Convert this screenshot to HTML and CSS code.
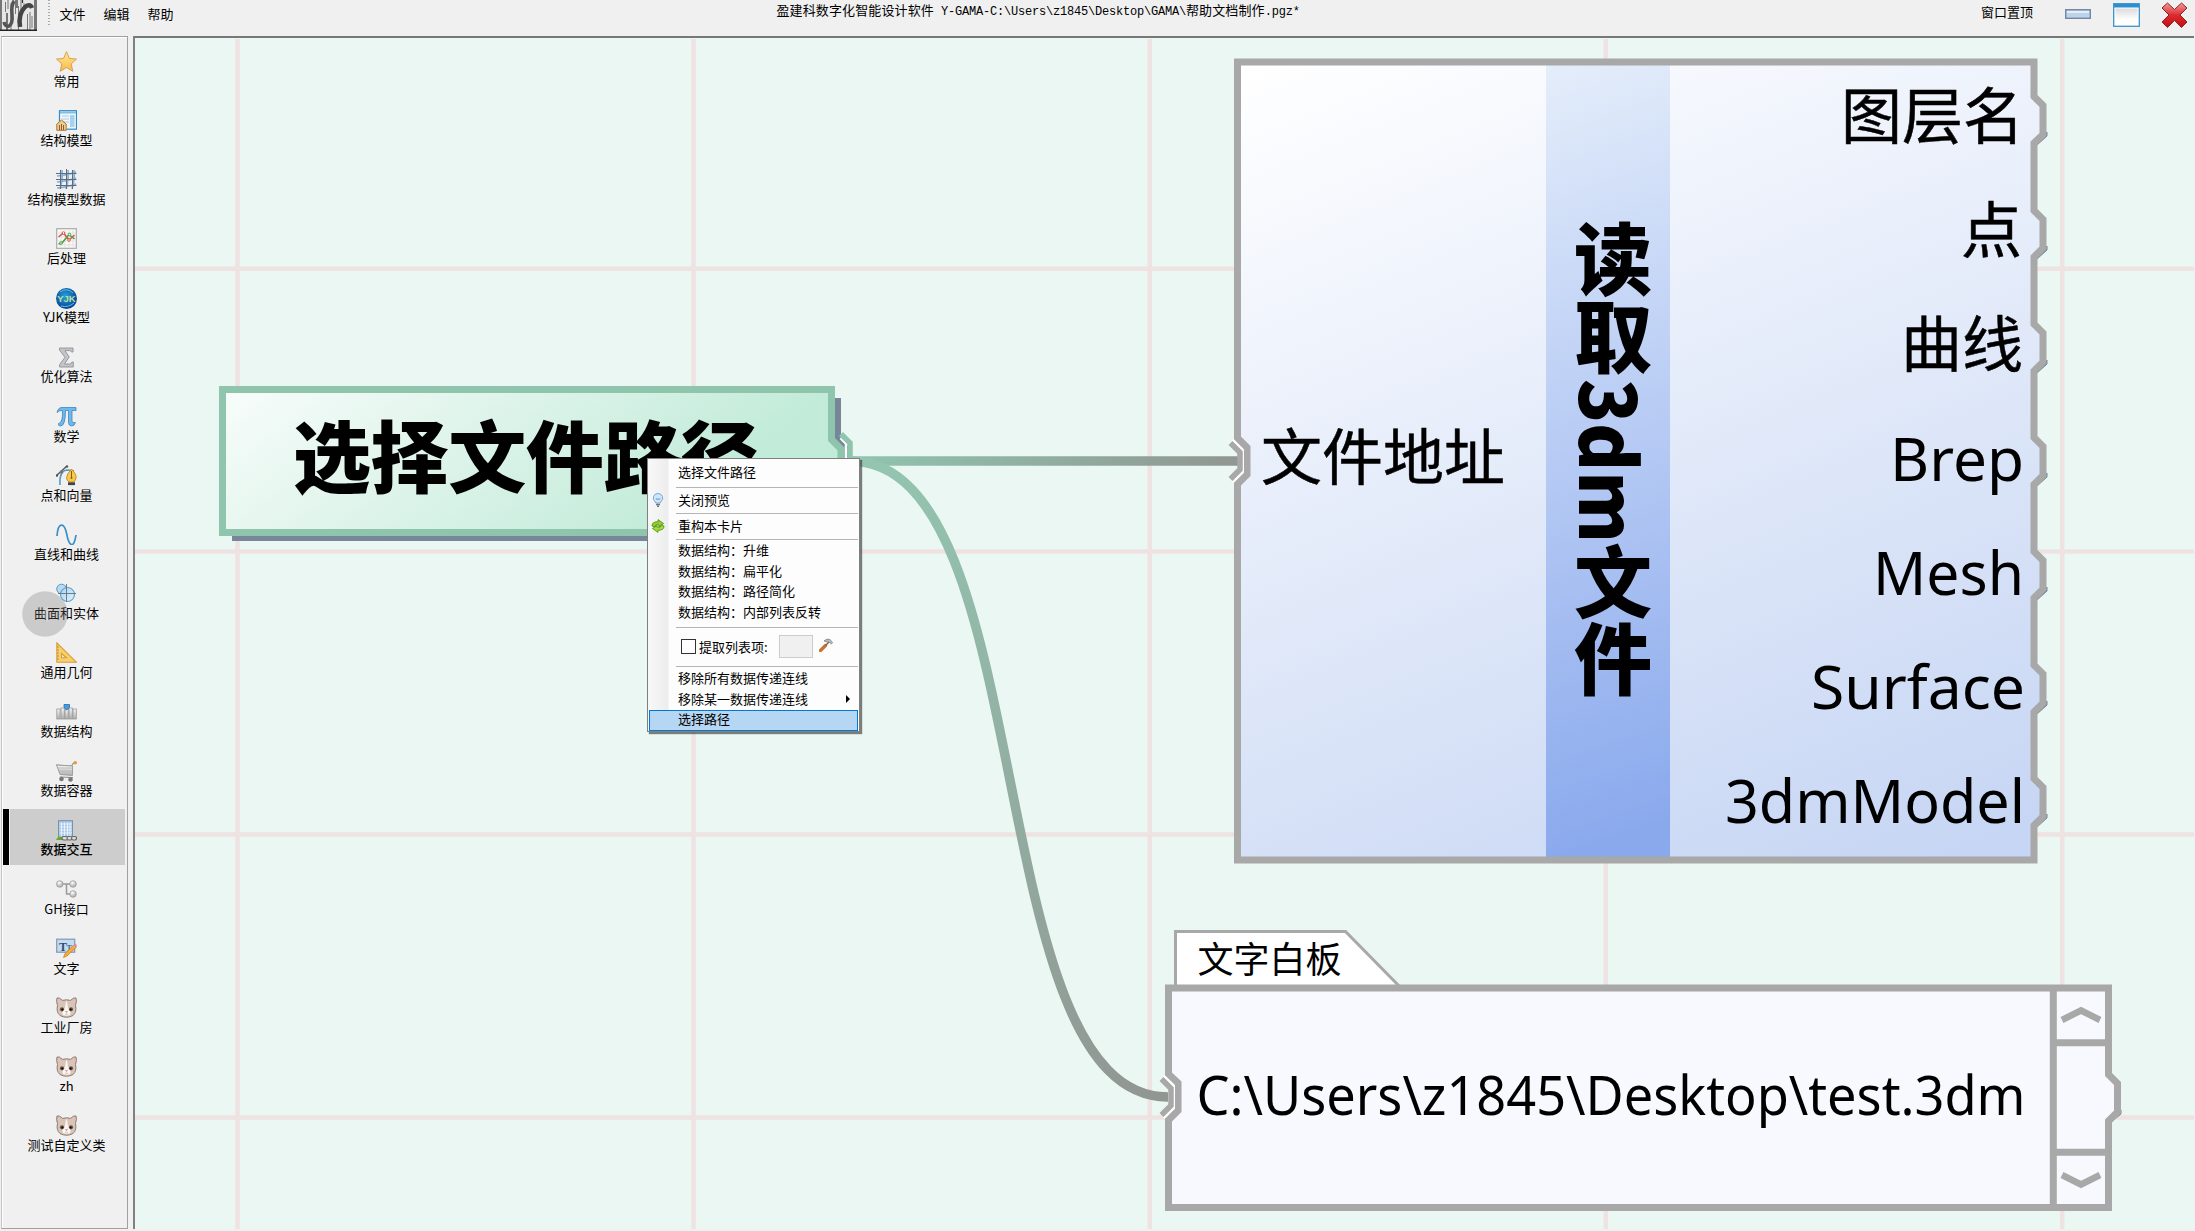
FILE: index.html
```html
<!DOCTYPE html>
<html lang="zh-CN">
<head>
<meta charset="utf-8">
<title>Y-GAMA</title>
<link rel="stylesheet" href="styles.css">
</head>
<body>
<svg class="defs" width="0" height="0">
  <defs>
    <linearGradient id="gold" x1="0" y1="0" x2="0" y2="1"><stop offset="0" stop-color="#ffeb9a"/><stop offset="1" stop-color="#f5bb45"/></linearGradient>
    <linearGradient id="ice" x1="0" y1="0" x2="1" y2="1"><stop offset="0" stop-color="#a9d4f2"/><stop offset="1" stop-color="#e2f1fb"/></linearGradient>
    <radialGradient id="globe" cx=".45" cy=".4" r=".6"><stop offset="0" stop-color="#2ba3df"/><stop offset="1" stop-color="#07408f"/></radialGradient>
    <radialGradient id="ball" cx=".4" cy=".3" r=".7"><stop offset="0" stop-color="#fff"/><stop offset="1" stop-color="#a5a5a5"/></radialGradient>
    <linearGradient id="steel" x1="0" y1="0" x2="0" y2="1"><stop offset="0" stop-color="#f6f6f6"/><stop offset="1" stop-color="#adadad"/></linearGradient>
    <linearGradient id="red" x1="0" y1="0" x2="0" y2="1"><stop offset="0" stop-color="#f49a9a"/><stop offset=".5" stop-color="#dd2a2e"/><stop offset="1" stop-color="#c40d12"/></linearGradient>
    <linearGradient id="pane" x1="0" y1="0" x2="0" y2="1"><stop offset="0" stop-color="#dcdcdc"/><stop offset=".7" stop-color="#fff"/></linearGradient>
    <symbol id="cat" viewBox="0 0 21 21">
      <path d="M1 1 Q3 0 6.5 3.4 Q10.500 2.200 14.500 3.400 Q18 0 20 1 Q21 4 19.500 8.500 Q21 15 17 18.500 Q10.500 22 4 18.500 Q0 15 1.500 8.500 Q0 4 1 1Z" fill="#d8c5b8" stroke="#8c7a72" stroke-width="1"/>
      <path d="M2.500 2.800 L5.200 4.700 3 7Z M18.500 2.800 L15.800 4.700 18 7Z" fill="#f2b9b5"/>
      <path d="M10 4.500 L9 11 Q5 14 7 18 Q10.500 19.500 14 18 Q16 14 12 11 L11 4.500Z" fill="#fbf6f2"/>
      <circle cx="6" cy="12.300" r="2.100" fill="#6b5546"/><circle cx="15" cy="12.300" r="2.100" fill="#6b5546"/>
      <circle cx="6.300" cy="12.500" r="1" fill="#120d0a"/><circle cx="14.700" cy="12.500" r="1" fill="#120d0a"/>
      <path d="M9.500 14.500h2l-1 1.200Z M9.200 17.200h2.600" fill="#d88" stroke="#c99" stroke-width=".7"/>
    </symbol>
  </defs>
</svg>

<header class="titlebar">
  <svg class="logo" viewBox="0 0 37 31">
    <rect width="37" height="31" fill="#e6e6e6"/>
    <path d="M1.500 0V31M5.500 2V12M8 0V9M11 3V30M15.500 0V14M18.500 6V31M21 0V12M24 3V9M27.500 14V31M30 12V30M34.500 0V31M13.500 0V5M32 16V28" stroke="#777" stroke-width="1"/>
    <path d="M0 0V31M7 13V30M17 0V8M22.500 0V3M36 0V31" stroke="#2c2c2c" stroke-width="1.200"/>
    <path d="M0 30.300H37" stroke="#222" stroke-width="1.500"/>
    <path d="M14 1 Q11 6 12 14 Q13 24 9 26 Q5 27 4 22" fill="none" stroke="#555" stroke-width="3.500"/>
    <path d="M20 27 Q18 14 25 7 Q30 3 32 8" fill="none" stroke="#444" stroke-width="4.500"/>
  </svg>
  <span class="grip"></span>
  <nav class="menubar"><span>文件</span><span>编辑</span><span>帮助</span></nav>
  <div class="doc-title">盈建科数字化智能设计软件<i> Y-GAMA-C:\Users\z1845\Desktop\GAMA\</i>帮助文档制作<i>.pgz*</i></div>
  <div class="window-tools">
    <span class="pin">窗口置顶</span>
    <svg class="win-min" viewBox="0 0 26 10"><rect x=".7" y=".7" width="24.600" height="8.600" fill="#bdd3ea" stroke="#7388a5" stroke-width="1.400"/><path d="M2 3H24" stroke="#e3eef8" stroke-width="2"/></svg>
    <svg class="win-max" viewBox="0 0 27 24"><rect x=".7" y=".7" width="25.600" height="22.600" fill="#fff" stroke="#3a93c9" stroke-width="1.300"/><rect x="1" y="1" width="25" height="3.500" fill="#2c8fd2"/><rect x="2.500" y="5.500" width="22" height="16" fill="url(#pane)"/></svg>
    <svg class="win-close" viewBox="0 0 27 26"><path d="M1 6 L6.500 1 13.500 7.500 20.500 1 26 6 19 13 26 20 20.500 25.500 13.500 18.500 6.500 25.500 1 20 8 13Z" fill="url(#red)" stroke="#8a2327" stroke-width="1"/></svg>
  </div>
</header>

<main class="workspace">
  <aside class="sidebar">
    <div class="cat"><svg viewBox="0 0 21 21"><path d="M10.500 .6 L13.400 7.500 20.500 8 15.200 12.900 16.800 20.300 10.500 16.500 4.200 20.300 5.800 12.900 .5 8 7.600 7.500Z" fill="url(#gold)" stroke="#dc9d52" stroke-width="1"/></svg><span>常用</span></div>
    <div class="cat"><svg viewBox="0 0 21 21"><rect x="3.500" y=".7" width="17" height="18.500" fill="#eef6fc" stroke="#2f8dc6" stroke-width="1.200"/><path d="M4 2.500H20" stroke="#7cbfe8" stroke-width="2"/><path d="M6 6h7M6 9h7M6 12h7" stroke="#b9cbdc"/><rect x="14" y="5" width="4.500" height="12" fill="#a6d1ef"/><path d="M.8 20.300V14L5.500 10 10.200 14V20.300Z" fill="#f1cb8c" stroke="#a8763c"/><path d="M3.500 20V15M5.500 20V14M7.500 20V15" stroke="#8f5f31" stroke-width="1"/></svg><span>结构模型</span></div>
    <div class="cat"><svg viewBox="0 0 21 21"><path d="M1 7 Q12 6 20 3M1 13 Q12 12 20 9M1 19 Q12 18 20 15M4 20Q7 10 6 1M10 20Q13 10 12 1M16 20Q19 10 18 1" fill="none" stroke="#82b1de" stroke-width="1.700"/><path d="M0 4.500H20.500M0 10.500H20.500M0 16.500H20.500M4.500 1V20M10.500 0V20M16.500 1V20" stroke="#646b75" stroke-width="1"/></svg><span>结构模型数据</span></div>
    <div class="cat"><svg viewBox="0 0 21 21"><rect x=".7" y=".7" width="19.600" height="19.600" fill="#f9f9f9" stroke="#aaa" stroke-width="1.200"/><path d="M5 2V19M9 2V19M13 2V19M17 2V19M2 5H19M2 9H19M2 13H19M2 17H19" stroke="#dedede" stroke-width=".8"/><path d="M2.500 9 L7.500 5 13 12 18.500 7" fill="none" stroke="#df5450" stroke-width="1.600"/><path d="M2.500 16 L6 15 13 6.500 18.500 11" fill="none" stroke="#4d9f3b" stroke-width="1.600"/><g fill="#fff"><circle cx="7.500" cy="5" r="1.300" stroke="#df5450"/><circle cx="13" cy="12" r="1.300" stroke="#df5450"/><circle cx="5" cy="15" r="1.300" stroke="#4d9f3b"/><circle cx="13.500" cy="6.500" r="1.300" stroke="#4d9f3b"/></g></svg><span>后处理</span></div>
    <div class="cat"><svg viewBox="0 0 21 21"><circle cx="10.500" cy="10.500" r="10.500" fill="url(#globe)"/><path d="M4 4Q11 -1 17 5M5 18Q12 20 18 15" stroke="#5cc4ee" fill="none"/><text x="10.500" y="14" class="globe-text" text-anchor="middle">YJK</text></svg><span>YJK模型</span></div>
    <div class="cat"><svg viewBox="0 0 21 21"><path d="M3.500 1H17V5H15.500L14.500 3.600H9L13.200 10 8.500 17H14.500L16 15H17.300V20H3.500V17.800L9 10.300 3.500 3Z" fill="#c4c5c9" stroke="#8f9195" stroke-width=".9"/></svg><span>优化算法</span></div>
    <div class="cat"><svg viewBox="0 0 21 21"><path d="M1 6.500Q2 1.500 6 1.500H20V4.500H16V15Q16 17.500 19.500 16.500Q18.500 20 15.500 20Q12.500 20 12.500 16V4.500H9.500Q9.500 20 4.500 20Q2 20 2.500 17.500Q7 17 6.500 4.500Q3.500 4 1 6.500Z" fill="#6db9ee" stroke="#3f84bb" stroke-width=".8"/></svg><span>数学</span></div>
    <div class="cat"><svg viewBox="0 0 21 21"><path d="M4 20Q3 5 12 5L18 6" fill="none" stroke="#4b9bc7" stroke-width="1.600"/><path d="M0 11L11 1" stroke="#555" stroke-width="1.300"/><circle cx="5.500" cy="7" r="1.800" fill="#777"/><circle cx="11" cy="1.500" r="1.200" fill="#555"/><circle cx="1" cy="10.500" r="1.200" fill="#555"/><path d="M15.500 4Q21 10 20 13Q19 16 18 17H13Q10.500 15 10.500 12.500Q11 9 15.500 4Z" fill="#f6ca4d" stroke="#c98d25"/><path d="M15.500 6V13" stroke="#8d5a12"/><circle cx="15.500" cy="13" r="1" fill="#8d5a12"/><path d="M12 18.700H19" stroke="#444" stroke-width="2.800"/></svg><span>点和向量</span></div>
    <div class="cat"><svg viewBox="0 0 21 21"><path d="M1 12C2 -2 8 -2 10.500 9C13 23 18 25 20 11" fill="none" stroke="#3990c8" stroke-width="1.700"/></svg><span>直线和曲线</span></div>
    <div class="cat"><svg viewBox="0 0 21 21"><circle cx="5.500" cy="6" r="4.800" fill="#b9d9f0" stroke="#5d9bc8"/><circle cx="11.500" cy="11.500" r="7" fill="url(#ice)" stroke="#64a4d1" stroke-width="1.200"/><path d="M10.500 1V19M2 10.500H20" stroke="#62707d" stroke-width=".9"/></svg><span>曲面和实体</span></div>
    <div class="cat"><svg viewBox="0 0 21 21"><path d="M.8 .8V20.200H20.300ZM5.500 11.500L10.500 15.800H5.500Z" fill="#f7cf6c" fill-rule="evenodd" stroke="#d89d38" stroke-width="1.100"/><path d="M1 5H3M1 8H3M1 11H3M1 14H3M1 17H3" stroke="#aa7420" stroke-width=".7"/></svg><span>通用几何</span></div>
    <div class="cat"><svg viewBox="0 0 21 21"><g fill="url(#steel)" stroke="#989898" stroke-width=".8"><rect x=".8" y="8" width="3.300" height="10"/><rect x="5" y="7" width="3.300" height="11"/><rect x="9" y="8" width="3.300" height="10"/><rect x="13" y="7" width="3.300" height="11"/><rect x="17" y="8" width="3.300" height="10"/></g><path d="M8 3.500H13.500V6.500L10.800 9 8 6.500Z" fill="#479be4" stroke="#2b6cac" stroke-width=".8"/></svg><span>数据结构</span></div>
    <div class="cat"><svg viewBox="0 0 21 21"><path d="M0 4L15.500 5 17.500 2H19.500" fill="none" stroke="#8d8d8d" stroke-width="1.200"/><path d="M.5 4L16.500 5V14.500L4 13.500Z" fill="url(#steel)" stroke="#999" stroke-width=".9"/><path d="M2 7H16M3 10H16" stroke="#aaa" stroke-width=".6"/><path d="M4 16L17 16.500" stroke="#888"/><circle cx="5.500" cy="18" r="2.300" fill="#777"/><circle cx="14.500" cy="18.500" r="2.300" fill="#777"/><circle cx="19.300" cy="1.800" r="1.700" fill="#e59a35"/></svg><span>数据容器</span></div>
    <div class="cat selected"><svg viewBox="0 0 21 21"><rect x="2.500" y=".7" width="14" height="17" fill="#a9c9e6" stroke="#7292ae" stroke-width="1"/><path d="M5.500 2.500V16M8.500 2.500V16M11.500 2.500V16M14 2.500V16M3.500 4H16M3.500 7H16M3.500 10H16M3.500 13H16" stroke="#f1f7fc" stroke-width=".8"/><path d="M0 20Q3 14 6 18V20Z" fill="#68a926"/><g fill="#ddd" stroke="#6a6a6a" stroke-width="1.200"><rect x="6" y="16.500" width="6" height="3.500" rx="1.700"/><rect x="11" y="16.500" width="5" height="3.500" rx="1.700"/><rect x="15.500" y="16.500" width="5" height="3.500" rx="1.700"/></g></svg><span>数据交互</span></div>
    <div class="cat"><svg viewBox="0 0 21 21"><path d="M4 5H17M10.500 5V15H17" fill="none" stroke="#999" stroke-width="1.500"/><g fill="url(#ball)" stroke="#999" stroke-width=".7"><circle cx="3.800" cy="5" r="3.300"/><circle cx="17" cy="5" r="3.300"/><circle cx="17" cy="15" r="3.300"/></g></svg><span>GH接口</span></div>
    <div class="cat"><svg viewBox="0 0 21 21"><rect x=".7" y="1.200" width="18" height="13" fill="#c4dbf0" stroke="#7e99b5" stroke-width="1.200"/><text x="3" y="12.500" class="tt-big">T</text><text x="10.500" y="12.500" class="tt-small">T</text><path d="M7.500 19.500L9 15.500 18 7 20.500 9 11 18Z" fill="#f4ab3b" stroke="#c77c20" stroke-width=".7"/><path d="M17.500 7.500L19.500 5.500 21 7.500 20 9Z" fill="#dc8bc0"/></svg><span>文字</span></div>
    <div class="cat"><svg viewBox="0 0 21 21"><use href="#cat"/></svg><span>工业厂房</span></div>
    <div class="cat"><svg viewBox="0 0 21 21"><use href="#cat"/></svg><span>zh</span></div>
    <div class="cat"><svg viewBox="0 0 21 21"><use href="#cat"/></svg><span>测试自定义类</span></div>
    <svg class="touch" viewBox="0 0 46 46"><circle cx="23" cy="23" r="22.800"/><path d="M19 23L26 15V31Z"/></svg>
  </aside>

  <section class="canvas">
    <svg class="diagram" viewBox="135 38 2058.500 1191">
      <defs>
        <linearGradient id="mint" gradientUnits="userSpaceOnUse" x1="240" y1="360" x2="480" y2="670"><stop offset="0" stop-color="#fafdfc"/><stop offset="1" stop-color="#c2ebd9"/></linearGradient>
        <linearGradient id="cardblue" gradientUnits="userSpaceOnUse" x1="1241" y1="66" x2="1609" y2="986"><stop offset="0" stop-color="#fff"/><stop offset="1" stop-color="#c7d6f4"/></linearGradient>
        <linearGradient id="band" gradientUnits="userSpaceOnUse" x1="1546" y1="66" x2="1790" y2="780"><stop offset="0" stop-color="#e4edfa"/><stop offset=".25" stop-color="#ccdbf7"/><stop offset="1" stop-color="#8aa9ed"/></linearGradient>
        <linearGradient id="wireA" gradientUnits="userSpaceOnUse" x1="852" y1="0" x2="1238" y2="0"><stop offset="0" stop-color="#8fc5ae"/><stop offset="1" stop-color="#919693"/></linearGradient>
        <linearGradient id="wireB" gradientUnits="userSpaceOnUse" x1="852" y1="461" x2="1168" y2="1097"><stop offset="0" stop-color="#93c6b1"/><stop offset="1" stop-color="#919693"/></linearGradient>
      </defs>
      <rect x="134" y="38" width="2061" height="1193" fill="#eaf7f3"/>
      <path class="grid" d="M237.500 39V1229M693.500 39V1229M1149.800 39V1229M1605.800 39V1229M2062.200 39V1229M135 268.700H2194M135 551.500H2194M135 834.500H2194M135 1117.500H2194"/>

      <path d="M232 398H841V440L850 448V478L841 487V541H232Z" fill="#778799"/>
      <path d="M222.500 389.500H831.500V439.500L841 449V474L831.500 483.500V532.500H222.500Z" fill="url(#mint)" stroke="#8fc5ad" stroke-width="7"/>
      <path d="M840.500 438L846 443.500V478.500L840.500 484" fill="none" stroke="#fff" stroke-width="2.500"/>
      <path class="wire" d="M852 461H1238" stroke="url(#wireA)"/>
      <path class="wire" d="M850 461C1042 461 978 1097 1168 1097" stroke="url(#wireB)"/>
      <path d="M841 434L850 443V479L841 488" fill="none" stroke="#8fc5ad" stroke-width="5.500"/>
      <text class="heavy" x="293" y="487" textLength="466">选择文件路径</text>

      <path d="M2037 145L2047 136V132ZM2037 259L2047 250V246ZM2037 373L2047 364V360ZM2037 486L2047 477V473ZM2037 600L2047 591V587ZM2037 714L2047 705V701ZM2037 827L2047 818V814Z" fill="#778799" stroke="#778799" stroke-width="1"/>
      <path d="M1237.500 62H2034V96.500L2043 105.500V134.500L2034 143V210.500L2043 219.500V248L2034 257V324L2043 333V362L2034 371V437.500L2043 446.500V475.500L2034 484.500V551.500L2043 560.500V589L2034 598V665L2043 674V703L2034 712V778.500L2043 787.500V816.500L2034 825.500V860H1237.500V484L1247 474.500V447.500L1237.500 438Z" fill="url(#cardblue)"/>
      <rect x="1546" y="65" width="124" height="792" fill="url(#band)"/>
      <path d="M1237.500 62H2034V96.500L2043 105.500V134.500L2034 143V210.500L2043 219.500V248L2034 257V324L2043 333V362L2034 371V437.500L2043 446.500V475.500L2034 484.500V551.500L2043 560.500V589L2034 598V665L2043 674V703L2034 712V778.500L2043 787.500V816.500L2034 825.500V860H1237.500V484L1247 474.500V447.500L1237.500 438Z" class="frame"/>
      <path class="socket-gap" d="M1232.500 440L1242.500 450V472L1232.500 482"/>
      <path class="socket" d="M1230.500 443L1240 452.500V469.500L1230.500 479"/>
      <text class="heavy vertical" x="1613" y="220" textLength="156">读取</text>
      <text class="heavy vertical" x="1613" y="379" textLength="164" lengthAdjust="spacingAndGlyphs">3dm</text>
      <text class="heavy vertical" x="1613" y="543" textLength="155">文件</text>
      <text class="port" x="1261" y="480" textLength="244">文件地址</text>
      <text class="port" x="1841" y="138.500" textLength="183">图层名</text>
      <text class="port" x="1961" y="252.500">点</text>
      <text class="port" x="1901" y="366.500" textLength="122">曲线</text>
      <text class="latin" x="1890" y="480.500" textLength="134" lengthAdjust="spacingAndGlyphs">Brep</text>
      <text class="latin" x="1873" y="594.500" textLength="151" lengthAdjust="spacingAndGlyphs">Mesh</text>
      <text class="latin" x="1811" y="708.500" textLength="214" lengthAdjust="spacingAndGlyphs">Surface</text>
      <text class="latin" x="1725" y="822.500" textLength="300" lengthAdjust="spacingAndGlyphs">3dmModel</text>

      <path d="M1175.500 988V931.500H1345.500L1400 987Z" fill="#fff" stroke="#a8a8a8" stroke-width="3"/>
      <text class="tab" x="1197.500" y="972.500" textLength="144">文字白板</text>
      <path d="M2111 1122L2121 1114V1110Z" fill="#778799" stroke="#778799"/>
      <path d="M1168.500 988H2108.500V1074.500L2117.500 1083.500V1112L2108.500 1121V1207.500H1168.500V1120L1178 1110.500V1083L1168.500 1074Z" fill="#f8f9ff"/>
      <path d="M1168.500 988H2108.500V1074.500L2117.500 1083.500V1112L2108.500 1121V1207.500H1168.500V1120L1178 1110.500V1083L1168.500 1074ZM2053.300 988V1207M2053.300 1042.700H2108M2053.300 1152.300H2108" class="frame"/>
      <path d="M2062 1020L2081 1010.500 2100 1020M2062 1175L2081 1184.500 2100 1175" fill="none" stroke="#a8a8a8" stroke-width="6.500"/>
      <path class="socket-gap" d="M1163.500 1076L1173.500 1086V1108L1163.500 1118"/>
      <path class="socket" d="M1161.500 1079L1171 1088.500V1105.500L1161.500 1115"/>
      <text class="latin path" x="1196.500" y="1114.500" textLength="829" lengthAdjust="spacingAndGlyphs">C:\Users\z1845\Desktop\test.3dm</text>
    </svg>

    <div class="context-menu">
      <div class="row first">选择文件路径</div>
      <hr>
      <div class="row"><svg viewBox="0 0 14 14"><path d="M7 .5A4.500 4.500 0 0 1 10 8.500L9.300 10H4.700L4 8.500A4.500 4.500 0 0 1 7 .5Z" fill="#cde6fa" stroke="#7ba7d2"/><path d="M5 5L6 7 7 5.500 8 7 9 5" fill="none" stroke="#65a0d6" stroke-width=".8"/><path d="M5 11.500H9M6 13.200H8" stroke="#777" stroke-width="1.400"/></svg>关闭预览</div>
      <hr>
      <div class="row"><svg viewBox="0 0 14 14"><path d="M1 7Q1 2.500 7 2.800V.6L12.500 4.500 8 8V5.800Q4 5 3.500 8Z" fill="#93cf25" stroke="#4a8a12" stroke-width=".8"/><path d="M13 7Q13 11.500 7 11.200V13.400L1.500 9.500 6 6.500V8.200Q10 9 10.500 6Z" fill="#a6da3a" stroke="#4a8a12" stroke-width=".8"/></svg>重构本卡片</div>
      <hr>
      <div class="row tight">数据结构：升维</div>
      <div class="row tight">数据结构：扁平化</div>
      <div class="row tight">数据结构：路径简化</div>
      <div class="row tight last">数据结构：内部列表反转</div>
      <hr>
      <div class="row extract"><span class="box"></span>提取列表项:<span class="field"></span><svg viewBox="0 0 14 14"><path d="M1.500 12.500L6.500 7.500" stroke="#c9722f" stroke-width="3.200" stroke-linecap="round"/><path d="M6.500 7.500L10 4" stroke="#666" stroke-width="1.500"/><path d="M5 3Q8 0 11 1.500L13.500 4.500 12.500 6 10 4 8.500 4Z" fill="#bbb" stroke="#777" stroke-width=".7"/></svg></div>
      <hr>
      <div class="row tight after">移除所有数据传递连线</div>
      <div class="row tight">移除某一数据传递连线<span class="more"></span></div>
      <div class="row tight active">选择路径</div>
    </div>
  </section>
</main>
</body>
</html>
```
FILE: styles.css
```css
* { box-sizing: border-box; }

body {
  margin: 0;
  width: 2195px;
  height: 1231px;
  overflow: hidden;
  background: #f0f0f0;
  color: #000;
  font: 13px/16px "Noto Sans CJK SC", sans-serif;
  display: flex;
  flex-direction: column;
}

.defs { position: absolute; }

/* title bar */
.titlebar {
  height: 36px;
  flex: none;
  display: grid;
  grid-template-columns: 37px 22.500px 717px 1fr auto;
  align-items: start;
}
.logo { width: 37px; height: 31px; }
.grip {
  width: 2px;
  height: 27px;
  margin-left: 11px;
  background: repeating-linear-gradient(#aaa 0 1px, transparent 1px 3px);
}
.menubar { display: flex; gap: 18px; padding-top: 6px; }
.doc-title { padding-top: 1.500px; white-space: pre; letter-spacing: .12px; }
.doc-title i {
  font: 12px/16px "Liberation Mono", monospace;
  letter-spacing: -.2px;
}
.window-tools { display: flex; align-items: flex-start; padding-right: 7px; }
.pin { padding-top: 4px; margin-right: 32px; }
.win-min { width: 26px; height: 10px; margin: 9px 22px 0 0; }
.win-max { width: 27px; height: 24px; margin: 3px 21px 0 0; }
.win-close { width: 27px; height: 26px; margin-top: 2px; }

.workspace { flex: 1; display: flex; gap: 5px; padding: 0 1px 2px 1px; min-height: 0; }

/* category list */
.sidebar {
  position: relative;
  width: 127px;
  flex: none;
  display: flex;
  flex-direction: column;
  gap: 3.14px;
  padding: 3px 1px 0 1px;
  border: 1px solid #a0a0a0;
  border-left-color: #c4c4c4;
  box-shadow: inset 1px 1px #fff;
}
.cat {
  height: 56px;
  flex: none;
  display: flex;
  flex-direction: column;
  align-items: center;
  padding-top: 11px;
  padding-left: 5px;
  margin-right: 1px;
  border-left: 0 solid #000;
}
.cat svg { width: 21px; height: 21px; flex: none; }
.cat span { margin-top: .8px; white-space: nowrap; }
.cat.selected {
  padding-left: 0;
  padding-right: 1px;
  border-left-width: 6px;
  box-shadow: inset 1px 0 #f0f0f0;
  background: #cdcdcd;
}
.selected span { font-weight: 500; }
.globe-text { font: bold 9.500px "Liberation Sans", sans-serif; fill: #b4e29d; }
.tt-big { font: bold 12px "Liberation Serif", serif; fill: #2f4f76; }
.tt-small { font: bold 8px "Liberation Serif", serif; fill: #4d6d93; }
.touch { position: absolute; left: 20px; top: 554px; width: 46px; height: 46px; }
.touch circle { fill: rgba(120, 120, 120, .3); }
.touch path { fill: rgba(255, 255, 255, .25); }

/* node canvas */
.canvas {
  position: relative;
  flex: 1;
  min-width: 0;
  border-top: 2px solid #777;
  border-left: 2px solid #808080;
  overflow: hidden;
}
.diagram { display: block; width: 2058.500px; height: 1191px; }
.grid { stroke: #eee2e2; stroke-width: 4.500; fill: none; }
.wire { fill: none; stroke-width: 9.500; }
.frame { fill: none; stroke: #a8a8a8; stroke-width: 7; }
.socket-gap { fill: none; stroke: #fff; stroke-width: 3; }
.socket { fill: none; stroke: #a8a8a8; stroke-width: 5.500; }
.heavy { font: 900 78px "Noto Sans CJK SC", sans-serif; }
.vertical { writing-mode: vertical-rl; }
.port { font: 61px "Noto Sans CJK SC", sans-serif; stroke: #000; stroke-width: .5px; }
.latin { font: 60px "Noto Sans", "Noto Sans CJK SC", sans-serif; }
.path { font-size: 54px; }
.tab { font: 36px "Noto Sans CJK SC", sans-serif; }

/* context menu over the canvas */
.context-menu {
  position: absolute;
  left: 512px;
  top: 420px;
  width: 213px;
  height: 274px;
  padding: 4px 1px 0 1px;
  border: 1px solid #808080;
  background: linear-gradient(90deg, #f8f8f8, #ededed 20px, #fdfdfd 21px);
  box-shadow: 2px 2px 1px rgba(60, 60, 60, .65);
}
.context-menu hr { border: 0; height: 1px; margin: 0 0 0 27px; background: #b4b4b4; }
.row {
  height: 25px;
  line-height: 20px;
  padding-left: 29px;
  padding-bottom: 2px;
  display: flex;
  align-items: center;
  white-space: nowrap;
}
.row > svg { width: 14px; height: 14px; margin-left: -27px; margin-right: 13px; }
.row.first { height: 24px; align-items: flex-start; }
.row.first { line-height: 18px; }
.row.tight { height: 20.500px; line-height: 18px; }
hr + .tight { margin-top: 1px; }
.row.tight.last { margin-bottom: 3.500px; }
.row.tight.after { margin-top: 2px; }
.row.extract { height: 38.500px; padding-left: 32px; padding-bottom: 0; }
.box { width: 15px; height: 15px; border: 1px solid #333; background: #fff; margin-right: 3px; }
.field { width: 34px; height: 23px; border: 1px solid #ccc; background: #f0f0f0; margin-left: 11px; }
.row.extract svg { margin: -3px 0 0 6px; }
.more {
  margin-left: 38px;
  border-left: 4px solid #000;
  border-top: 4px solid transparent;
  border-bottom: 4px solid transparent;
}
.row.active {
  background: #b5d7f3;
  box-shadow: inset 0 0 0 1px #0078d7;
}
```
